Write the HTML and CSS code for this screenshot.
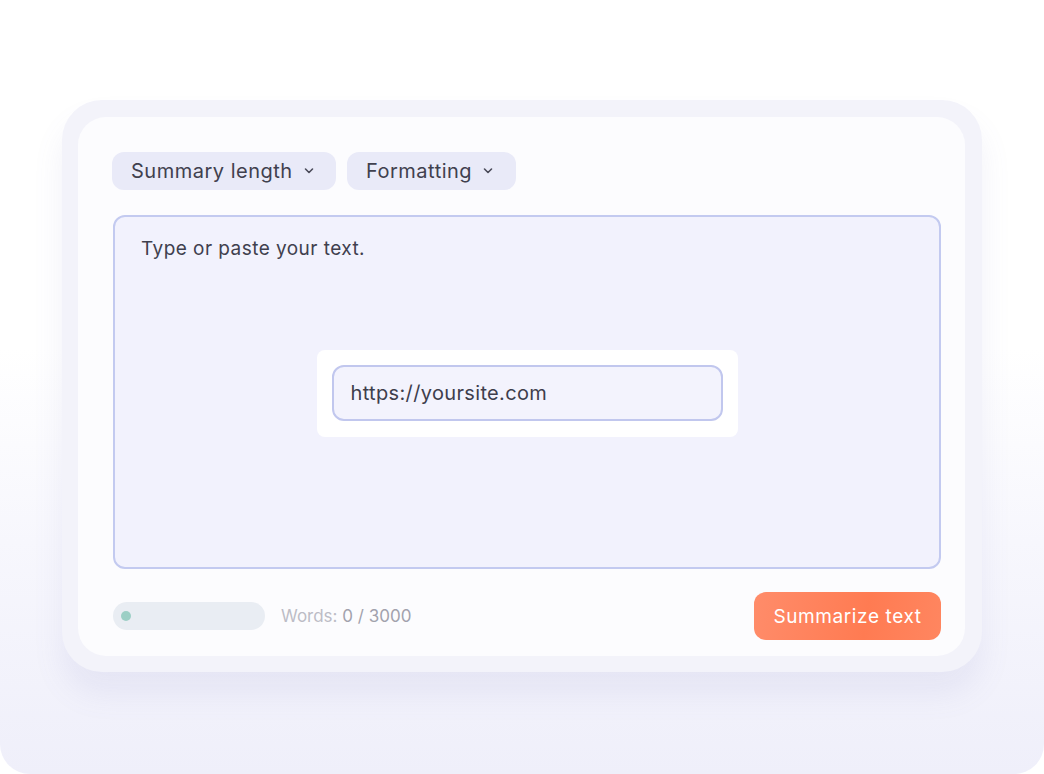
FILE: index.html
```html
<!DOCTYPE html>
<html>
<head>
<meta charset="utf-8">
<link rel="stylesheet" href="styles.css">
</head>
<body>
<div class="stage">
  <div class="outer">
    <div class="inner">
      <div class="toolbar">
        <button class="dd dd-len">Summary length
          <svg width="12" height="8" viewBox="0 0 12 8"><path d="M2.5 2 L6 5.5 L9.5 2" fill="none" stroke="#4a4a58" stroke-width="1.6" stroke-linecap="round" stroke-linejoin="round"/></svg>
        </button>
        <button class="dd dd-fmt">Formatting
          <svg width="12" height="8" viewBox="0 0 12 8"><path d="M2.5 2 L6 5.5 L9.5 2" fill="none" stroke="#4a4a58" stroke-width="1.6" stroke-linecap="round" stroke-linejoin="round"/></svg>
        </button>
      </div>
      <div class="editor">
        <div class="placeholder">Type or paste your text.</div>
        <div class="url-wrap">
          <div class="url-box">https://yoursite.com</div>
        </div>
      </div>
      <div class="footer">
        <div class="progress"><span class="dot"></span></div>
        <div class="words"><span class="wl">Words:</span> 0 / 3000</div>
        <div class="spacer"></div>
        <button class="cta">Summarize text</button>
      </div>
    </div>
  </div>
</div>
</body>
</html>
```
FILE: styles.css
```css
* { box-sizing: border-box; }
html, body { margin: 0; padding: 0; }
body {
  width: 1044px;
  height: 774px;
  background: #ffffff;
  font-family: "Inter", "Open Sans", sans-serif;
  overflow: hidden;
}
.stage {
  width: 1044px;
  height: 774px;
  padding: 100px 62px 0 62px;
  background: linear-gradient(to bottom, #ffffff 0%, #ffffff 45%, #f7f7fd 70%, #efeffa 100%);
  border-radius: 0 0 30px 30px;
}
.outer {
  width: 920px;
  height: 572px;
  background: #f3f3fa;
  border-radius: 40px;
  padding: 17px 17px 16px 16px;
  box-shadow: 0 22px 30px rgba(120, 120, 190, 0.10);
}
.inner {
  height: 100%;
  background: #fcfcfe;
  border-radius: 28px;
  padding: 35px 24px 16px 34px;
  display: flex;
  flex-direction: column;
}
.toolbar {
  display: flex;
  gap: 11px;
  height: 38px;
}
.dd {
  border: none;
  background: #e9eaf8;
  border-radius: 12px;
  height: 38px;
  padding: 0 0 0 19px;
  display: flex;
  align-items: center;
  gap: 10px;
  font-family: inherit;
  font-size: 20px;
  letter-spacing: 0.5px;
  color: #40404e;
}
.dd-len { width: 224px; }
.dd-fmt { width: 169px; }
.editor {
  margin-top: 25px;
  margin-left: 1px;
  height: 354px;
  border: 2px solid #c3caf0;
  background: #f2f2fd;
  border-radius: 12px;
  display: flex;
  flex-direction: column;
  align-items: center;
}
.placeholder {
  align-self: flex-start;
  margin: 20px 0 0 26px;
  font-size: 19px;
  letter-spacing: 0.45px;
  color: #40404e;
}
.url-wrap {
  margin-top: 90px;
  width: 421px;
  height: 87px;
  background: #ffffff;
  border-radius: 8px;
  padding: 15px 15px 16px 15px;
}
.url-box {
  height: 56px;
  border: 2px solid #c1c7ee;
  background: #f3f3fd;
  border-radius: 12px;
  padding-left: 17px;
  display: flex;
  align-items: center;
  font-size: 20px;
  letter-spacing: 0.35px;
  color: #3e3e4c;
}
.footer {
  margin-top: 23px;
  display: flex;
  align-items: center;
  height: 48px;
}
.progress {
  margin-left: 1px;
  width: 152px;
  height: 28px;
  border-radius: 14px;
  background: #e9edf3;
  display: flex;
  align-items: center;
  padding-left: 8px;
}
.dot {
  width: 10px;
  height: 10px;
  border-radius: 50%;
  background: #9ccfc5;
}
.words {
  margin-left: 16px;
  font-size: 17px;
  color: #a2a2ad;
}
.wl { color: #bcbcc6; }
.spacer { flex: 1; }
.cta {
  width: 187px;
  height: 48px;
  border: none;
  border-radius: 12px;
  background: linear-gradient(100deg, #ff8c6a 0%, #ff7b52 60%, #ff8660 100%);
  color: #ffffff;
  font-family: inherit;
  font-size: 19px;
  letter-spacing: 0.6px;
}
```
